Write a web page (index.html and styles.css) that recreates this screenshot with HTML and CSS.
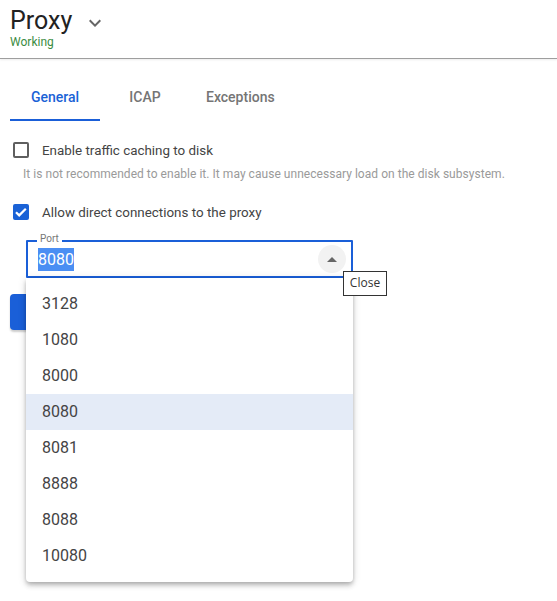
FILE: index.html
```html
<!DOCTYPE html>
<html>
<head>
<meta charset="utf-8">
<link rel="stylesheet" href="styles.css">
</head>
<body>
<header class="header">
  <div class="title-block">
    <div class="title-row">
      <h1 class="title">Proxy</h1>
      <svg class="chevron" viewBox="0 0 24 24" width="24" height="24"><path d="M16.59 8.59L12 13.17 7.41 8.59 6 10l6 6 6-6z" fill="#666"/></svg>
    </div>
    <div class="status">Working</div>
  </div>
</header>
<main class="content">
  <nav class="tabs">
    <div class="tab active">General</div>
    <div class="tab">ICAP</div>
    <div class="tab">Exceptions</div>
  </nav>
  <label class="check-row first">
    <span class="box"></span>
    <span class="check-label">Enable traffic caching to disk</span>
  </label>
  <div class="hint">It is not recommended to enable it. It may cause unnecessary load on the disk subsystem.</div>
  <label class="check-row second">
    <span class="box checked"><svg viewBox="0 0 16 16" width="16" height="16"><path d="M3 8.2l3.2 3.2 6.6-6.6" fill="none" stroke="#fff" stroke-width="2.2"/></svg></span>
    <span class="check-label">Allow direct connections to the proxy</span>
  </label>
  <div class="field-wrap">
    <div class="field">
      <span class="field-label">Port</span>
      <span class="value">8080</span>
      <span class="arrow-btn"><svg viewBox="0 0 24 24" width="24" height="24"><path d="M7 14l5-5 5 5z" fill="#666"/></svg></span>
    </div>
    <ul class="dropdown">
      <li class="option">3128</li>
      <li class="option">1080</li>
      <li class="option">8000</li>
      <li class="option selected">8080</li>
      <li class="option">8081</li>
      <li class="option">8888</li>
      <li class="option">8088</li>
      <li class="option">10080</li>
    </ul>
    <div class="tooltip">Close</div>
  </div>
  <button class="save-btn" aria-label="Save"></button>
</main>
</body>
</html>
```
FILE: styles.css
```css
* { box-sizing: border-box; }
html, body { margin: 0; padding: 0; background: #fff; }
body { font-family: Roboto, "Noto Sans", sans-serif; color: #333; width: 557px; height: 601px; overflow: hidden; }

.header {
  height: 59px;
  border-bottom: 1px solid #9e9e9e;
  box-shadow: 0 1px 2px rgba(0,0,0,0.08);
  padding: 7px 10px 0;
}
.title-row { display: flex; align-items: center; height: 28px; }
.title { margin: 0; font-size: 25px; font-weight: 400; line-height: 28px; color: #222; }
.chevron { margin-left: 11px; margin-top: 3px; }
.status { font-size: 12px; line-height: 14px; color: #3c8c3f; }

.content { padding: 0 10px; position: relative; }
.tabs { display: flex; margin-top: 14px; height: 48px; }
.tab {
  min-width: 90px; padding: 0 16px; height: 48px;
  display: flex; align-items: center; justify-content: center;
  font-size: 14px; font-weight: 500; color: #757575;
}
.tab.active { color: #1a62d6; border-bottom: 2px solid #1a5fd8; padding-top: 2px; }

.check-row { display: flex; align-items: center; height: 24px; padding-left: 3px; }
.check-row.first { margin-top: 17px; }
.check-row.second { margin-top: 18px; }
.box {
  width: 16px; height: 16px; border: 2px solid #5f5f5f; border-radius: 2px;
  display: flex; align-items: center; justify-content: center;
}
.box.checked { background: #1a62d6; border: none; }
.check-label { margin-left: 13px; font-size: 13.4px; color: #444; }
.hint { margin-top: 4px; padding-left: 13px; font-size: 12px; line-height: 16px; color: #9a9a9a; letter-spacing: 0.04px; }

.field-wrap { position: relative; margin-top: 16px; margin-left: 16px; width: 327px; }
.field {
  position: relative; height: 38px; border: 2px solid #1a5fd8; border-radius: 1px;
  display: flex; align-items: center; padding: 0 5px 0 10px;
}
.field-label {
  position: absolute; top: -9px; left: 9px; padding: 0 3px;
  background: #fff; font-size: 10px; line-height: 12px; color: #777;
}
.value {
  display: inline-block; height: 23px; line-height: 23px; margin-top: 1px;
  font-size: 16px; color: #fff; background: #4a8ef3;
}
.arrow-btn {
  margin-left: auto; width: 28px; height: 28px; border-radius: 50%;
  background: #f2f2f2; display: flex; align-items: center; justify-content: center;
}
.arrow-btn svg { margin-top: 1px; }

.dropdown {
  position: absolute; top: 38px; left: 0; width: 327px; margin: 0; padding: 8px 0;
  list-style: none; background: #fff; border-radius: 0 0 4px 4px; z-index: 2;
  box-shadow: 0 2px 4px -1px rgba(0,0,0,0.2), 0 4px 5px 0 rgba(0,0,0,0.14), 0 1px 10px 0 rgba(0,0,0,0.12);
}
.option { height: 36px; line-height: 36px; padding-left: 16px; font-size: 16px; color: #444; }
.option.selected { background: #e4ebf7; }

.tooltip {
  position: absolute; left: 317px; top: 31px; width: 44px; height: 25px;
  border: 1px solid #333; background: #fff; z-index: 3;
  font-family: "Open Sans", "Liberation Sans", sans-serif; font-size: 12px; line-height: 22px;
  color: #333; text-align: center;
}

.save-btn {
  margin-top: 16px; height: 36px; width: 100px; border: none; border-radius: 4px;
  background: #1a5fd8; padding: 0; box-shadow: 0 2px 2px rgba(0,0,0,0.2); display: block;
}
```
